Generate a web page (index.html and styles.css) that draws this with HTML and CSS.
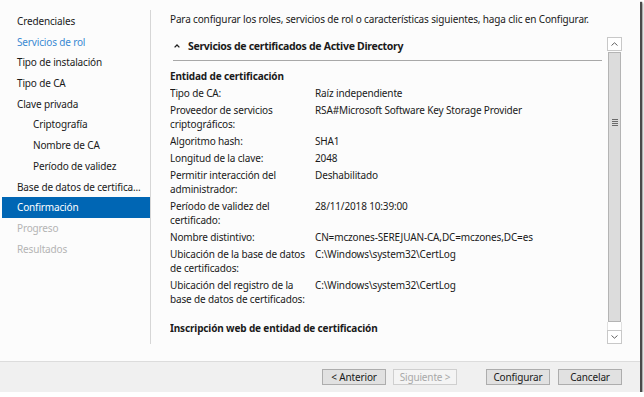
FILE: index.html
```html
<!DOCTYPE html>
<html lang="es">
<head>
<meta charset="utf-8">
<link rel="stylesheet" href="styles.css">
</head>
<body>
<div class="window">
  <div class="main">
    <nav class="nav">
      <div class="nav-item">Credenciales</div>
      <div class="nav-item link">Servicios de rol</div>
      <div class="nav-item">Tipo de instalación</div>
      <div class="nav-item">Tipo de CA</div>
      <div class="nav-item">Clave privada</div>
      <div class="nav-item sub">Criptografía</div>
      <div class="nav-item sub">Nombre de CA</div>
      <div class="nav-item sub">Período de validez</div>
      <div class="nav-item">Base de datos de certifica...</div>
      <div class="nav-item active">Confirmación</div>
      <div class="nav-item disabled">Progreso</div>
      <div class="nav-item disabled">Resultados</div>
    </nav>
    <section class="content">
      <p class="intro">Para configurar los roles, servicios de rol o características siguientes, haga clic en Configurar.</p>
      <div class="panel">
        <div class="scroll-content">
          <div class="group-header">
            <svg class="chevron" width="6" height="4" viewBox="0 0 6 4"><polyline points="0.6,3.4 3,1 5.4,3.4" fill="none" stroke="#1e1e1e" stroke-width="1.3"/></svg>
            <span>Servicios de certificados de Active Directory</span>
          </div>
          <div class="section-title">Entidad de certificación</div>
          <div class="rows">
            <div class="row"><div class="label">Tipo de CA:</div><div class="value">Raíz independiente</div></div>
            <div class="row"><div class="label">Proveedor de servicios criptográficos:</div><div class="value">RSA#Microsoft Software Key Storage Provider</div></div>
            <div class="row"><div class="label">Algoritmo hash:</div><div class="value">SHA1</div></div>
            <div class="row"><div class="label">Longitud de la clave:</div><div class="value">2048</div></div>
            <div class="row"><div class="label">Permitir interacción del administrador:</div><div class="value">Deshabilitado</div></div>
            <div class="row"><div class="label">Período de validez del certificado:</div><div class="value">28/11/2018 10:39:00</div></div>
            <div class="row"><div class="label">Nombre distintivo:</div><div class="value">CN=mczones-SEREJUAN-CA,DC=mczones,DC=es</div></div>
            <div class="row"><div class="label">Ubicación de la base de datos de certificados:</div><div class="value">C:\Windows\system32\CertLog</div></div>
            <div class="row"><div class="label">Ubicación del registro de la base de datos de certificados:</div><div class="value">C:\Windows\system32\CertLog</div></div>
          </div>
          <div class="section-title next">Inscripción web de entidad de certificación</div>
        </div>
        <div class="scrollbar">
          <div class="sb-btn">
            <svg width="7" height="4" viewBox="0 0 7 4"><polyline points="0.5,3.5 3.5,0.8 6.5,3.5" fill="none" stroke="#606060" stroke-width="1"/></svg>
          </div>
          <div class="sb-thumb">
            <div class="grip"><span></span><span></span><span></span><span></span></div>
          </div>
          <div class="sb-track"></div>
          <div class="sb-btn">
            <svg width="7" height="4" viewBox="0 0 7 4"><polyline points="0.5,0.5 3.5,3.2 6.5,0.5" fill="none" stroke="#606060" stroke-width="1"/></svg>
          </div>
        </div>
      </div>
    </section>
  </div>
  <footer class="footer">
    <button class="btn">&lt; Anterior</button>
    <button class="btn disabled">Siguiente &gt;</button>
    <button class="btn primary">Configurar</button>
    <button class="btn">Cancelar</button>
  </footer>
</div>
</body>
</html>
```

FILE: styles.css
```css
* { box-sizing: border-box; }
html, body { margin: 0; padding: 0; background: #ffffff; }
body {
  font-family: "Noto Sans", "Open Sans", sans-serif;
  font-size: 10px;
  letter-spacing: -0.15px;
  color: #1a1a1a;
}
.window {
  width: 640px;
  height: 392px;
  background: #fcfcfc;
  display: flex;
  flex-direction: column;
  box-shadow: 2px 2px 1px #4a4a4a, 3px 3px 2px rgba(0,0,0,0.35);
}
.main {
  flex: 1;
  display: flex;
  min-height: 0;
}
.nav {
  width: 151px;
  margin: 10px 0 17px 0;
  padding-top: 1px;
  border-right: 1px solid #d6d6d6;
  display: flex;
  flex-direction: column;
}
.nav-item {
  height: 20.7px;
  line-height: 21.5px;
  margin-left: 2px;
  padding-left: 15px;
  white-space: nowrap;
  overflow: hidden;
  color: #1a1a1a;
}
.nav-item.sub { padding-left: 31px; }
.nav-item.link { color: #3a8ad3; }
.nav-item.active { background: #0066b4; color: #ffffff; }
.nav-item.disabled { color: #b4b4b4; }
.content {
  flex: 1;
  display: flex;
  flex-direction: column;
  padding: 12px 18px 17px 19px;
  min-width: 0;
}
.intro {
  margin: 0;
  line-height: 14px;
  white-space: nowrap;
}
.panel {
  margin-top: 11px;
  flex: 1;
  display: flex;
  min-height: 0;
}
.scroll-content {
  flex: 1;
  overflow: hidden;
  min-width: 0;
}
.group-header {
  display: flex;
  align-items: center;
  gap: 8px;
  height: 24px;
  padding: 0 0 6px 1px;
  margin: 0 5px 0 3px;
  border-bottom: 1px solid #a8a8a8;
  font-weight: bold;
  font-size: 10.5px;
  letter-spacing: -0.3px;
}
.group-header span { line-height: 18px; }
.chevron { display: block; flex: none; }
.section-title {
  margin-top: 8px;
  line-height: 14px;
  font-weight: bold;
}
.section-title.next { margin-top: 15px; }
.rows {
  display: flex;
  flex-direction: column;
  gap: 3px;
  margin-top: 3px;
}
.row {
  display: grid;
  grid-template-columns: 145px 1fr;
  line-height: 14px;
}
.label { padding-right: 6px; }
.value { white-space: nowrap; }
.scrollbar {
  width: 15px;
  display: flex;
  flex-direction: column;
}
.sb-btn {
  height: 14px;
  background: #ffffff;
  border: 1px solid #c8c8c8;
  display: flex;
  align-items: center;
  justify-content: center;
  flex: none;
}
.sb-thumb {
  flex: 1;
  margin: 1px 1px 0 1px;
  background: #dcdcdc;
  border: 1px solid #b4b4b4;
  display: flex;
  align-items: center;
  justify-content: center;
  padding-bottom: 130px;
}
.grip {
  display: flex;
  flex-direction: column;
  gap: 1px;
}
.grip span {
  display: block;
  width: 6px;
  height: 1px;
  background: #6a6a6a;
}
.sb-track {
  height: 8px;
  flex: none;
  background: #ffffff;
  border-left: 1px solid #e0e0e0;
  border-right: 1px solid #e0e0e0;
}
.footer {
  height: 31px;
  flex: none;
  background: #f0f0f0;
  border-top: 1px solid #dcdcdc;
  display: flex;
  align-items: center;
  justify-content: flex-end;
  padding: 0 18px 0 0;
}
.btn {
  width: 64px;
  height: 16px;
  padding: 0;
  font-family: inherit;
  font-size: 10px;
  letter-spacing: -0.15px;
  line-height: 14px;
  color: #1a1a1a;
  background: #e1e1e1;
  border: 1px solid #adadad;
  margin-left: 7px;
}
.btn.disabled {
  color: #a8a8a8;
  background: #f4f4f4;
  border-color: #cfcfcf;
}
.btn.primary { margin-left: 29px; }
.btn:last-child { margin-left: 8px; }
```
